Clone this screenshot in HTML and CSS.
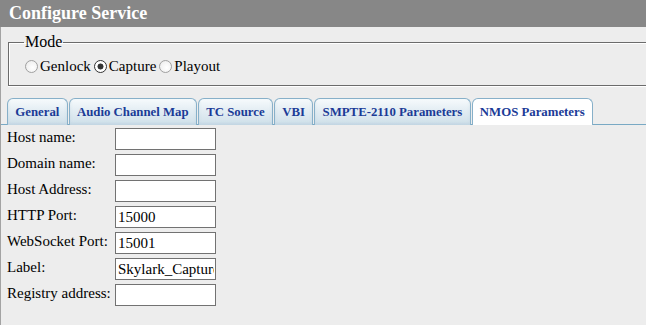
FILE: index.html
```html
<!DOCTYPE html>
<html>
<head>
<meta charset="utf-8">
<link rel="stylesheet" href="styles.css">
</head>
<body>
<div class="header">Configure Service</div>
<div class="main">
  <fieldset class="mode">
    <legend>Mode</legend>
    <label class="opt"><input type="radio" name="mode" class="radio">Genlock</label><label class="opt"><input type="radio" name="mode" class="radio" checked>Capture</label><label class="opt"><input type="radio" name="mode" class="radio">Playout</label>
  </fieldset>
  <ul class="tabs">
    <li class="tab">General</li>
    <li class="tab">Audio Channel Map</li>
    <li class="tab">TC Source</li>
    <li class="tab">VBI</li>
    <li class="tab">SMPTE-2110 Parameters</li>
    <li class="tab active">NMOS Parameters</li>
  </ul>
  <div class="form">
    <div class="row"><span class="lbl">Host name:</span><input class="field" type="text" value=""></div>
    <div class="row"><span class="lbl">Domain name:</span><input class="field" type="text" value=""></div>
    <div class="row"><span class="lbl">Host Address:</span><input class="field" type="text" value=""></div>
    <div class="row"><span class="lbl">HTTP Port:</span><input class="field" type="text" value="15000"></div>
    <div class="row"><span class="lbl">WebSocket Port:</span><input class="field" type="text" value="15001"></div>
    <div class="row"><span class="lbl">Label:</span><input class="field" type="text" value="Skylark_Capture"></div>
    <div class="row"><span class="lbl">Registry address:</span><input class="field" type="text" value=""></div>
  </div>
</div>
</body>
</html>
```
FILE: styles.css
```css
html, body {
  margin: 0;
  padding: 0;
  background: #ededed;
  overflow: hidden;
  font-family: "Liberation Serif", "Times New Roman", serif;
  color: #000;
}
.header {
  background: #878787;
  color: #fff;
  font-weight: bold;
  font-size: 18px;
  height: 27px;
  line-height: 27px;
  padding-left: 9px;
}
.main {
  border-left: 1px solid #a3a3a3;
  height: 298px;
  box-sizing: border-box;
  padding-top: 6px;
}
.mode {
  margin: 0 0 0 7px;
  border: 1px solid #6b6b6b;
  border-right: none;
  box-shadow: inset 1px 1px 0 #fff, 0 1px 0 #fff;
  padding: 6px 0 8px 13px;
  font-size: 15px;
  line-height: 18px;
}
.mode legend {
  font-size: 16px;
  padding: 0 1px;
  margin-left: 2px;
}
.opt {
  display: inline-flex;
  align-items: center;
}
.radio {
  appearance: none;
  -webkit-appearance: none;
  width: 13px;
  height: 13px;
  margin: 0 2px 0 3px;
  border: 1px solid #a0a0a0;
  border-radius: 50%;
  background: radial-gradient(circle at 60% 60%, #ffffff 0, #f2f2f2 60%, #e2e2e2 100%);
  box-sizing: border-box;
}
.radio:checked {
  border-color: #333;
  background: radial-gradient(circle, #333 0 2.7px, #fff 3.3px);
}
.tabs {
  list-style: none;
  margin: 12px 0 0 0;
  padding: 0 0 0 6px;
  display: flex;
  gap: 1px;
  border-bottom: 1px solid #79a9c4;
  height: 26px;
}
.tab {
  box-sizing: border-box;
  height: 27px;
  padding: 6px 7.3px 0 7.3px;
  font-size: 12.8px;
  font-weight: bold;
  color: #1b3b97;
  border: 1px solid #87b0c9;
  border-bottom: none;
  border-radius: 6px 6px 0 0;
  background: linear-gradient(#f6fafc 0%, #e3edf3 45%, #d0e0ea 100%);
  box-shadow: inset 0 -2px 3px rgba(160,190,210,0.3);
}
.tab.active {
  background: #fff;
  box-shadow: none;
}
.form {
  padding: 3px 0 0 6px;
}
.row {
  display: flex;
  align-items: flex-start;
  height: 26px;
  font-size: 15px;
}
.lbl {
  width: 108px;
  padding-top: 1px;
  white-space: nowrap;
}
.field {
  box-sizing: border-box;
  width: 101px;
  height: 22px;
  margin: 0;
  border: 1px solid #727272;
  background: #fff;
  padding: 2px 1px 0 2px;
  font-family: "Liberation Serif", "Times New Roman", serif;
  font-size: 15px;
  color: #000;
}
```
